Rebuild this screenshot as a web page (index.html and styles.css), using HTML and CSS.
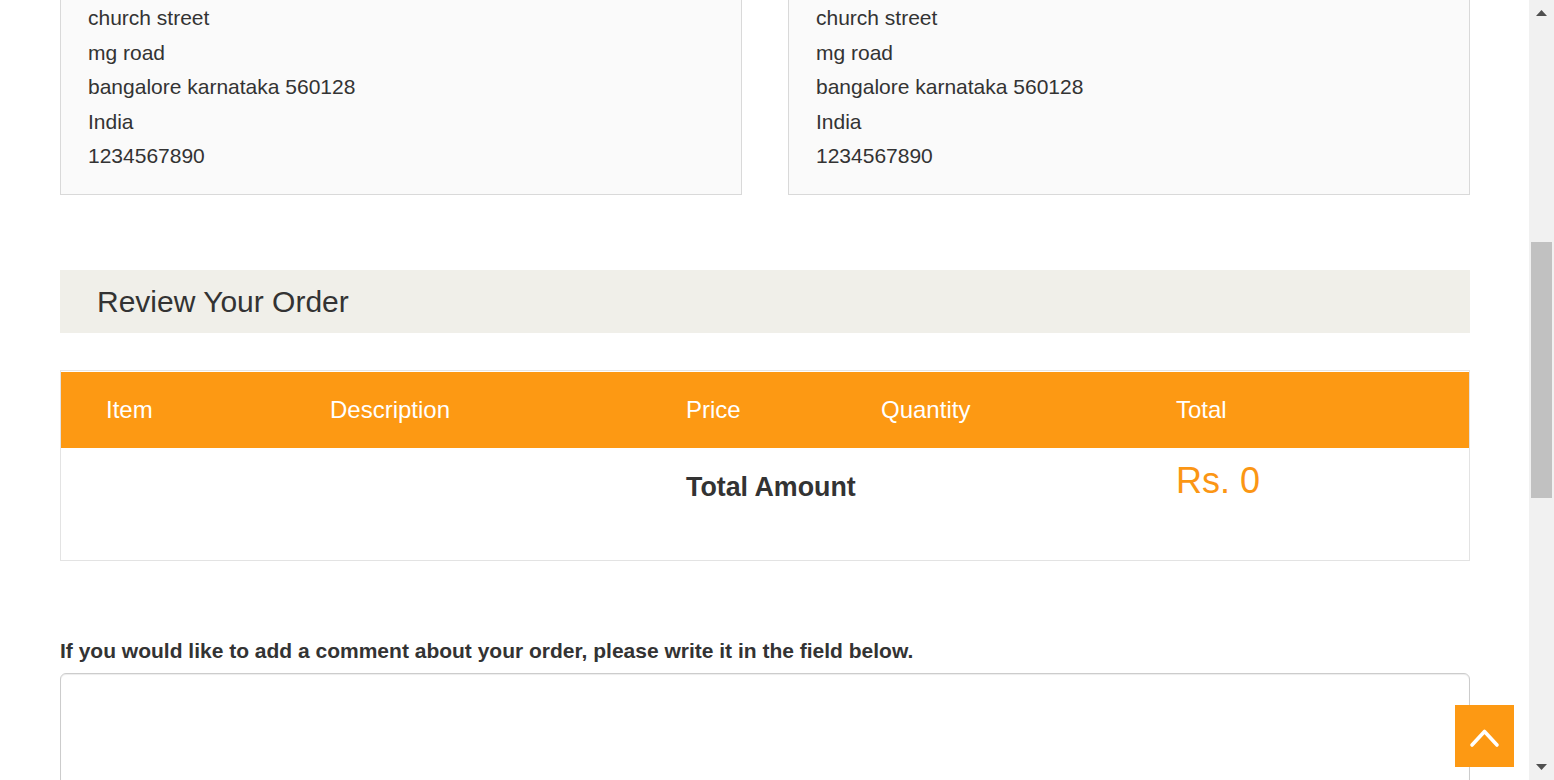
FILE: index.html
```html
<!DOCTYPE html>
<html lang="en">
<head>
<meta charset="utf-8">
<title>Review Your Order</title>
<link rel="stylesheet" href="styles.css">
</head>
<body>
<main class="page">
  <section class="addresses">
    <div class="address-box">
      <p>church street</p>
      <p>mg road</p>
      <p>bangalore karnataka 560128</p>
      <p>India</p>
      <p>1234567890</p>
    </div>
    <div class="address-box">
      <p>church street</p>
      <p>mg road</p>
      <p>bangalore karnataka 560128</p>
      <p>India</p>
      <p>1234567890</p>
    </div>
  </section>

  <h2 class="section-title">Review Your Order</h2>

  <div class="order-table">
    <div class="row head">
      <div class="cell">Item</div>
      <div class="cell">Description</div>
      <div class="cell">Price</div>
      <div class="cell">Quantity</div>
      <div class="cell">Total</div>
    </div>
    <div class="row body">
      <div class="cell"></div>
      <div class="cell"></div>
      <div class="cell total-label">Total Amount</div>
      <div class="cell"></div>
      <div class="cell total-value">Rs. 0</div>
    </div>
  </div>

  <label class="comment-label" for="comment">If you would like to add a comment about your order, please write it in the field below.</label>
  <textarea id="comment" class="comment-box"></textarea>
</main>

<a class="to-top" href="#" aria-label="Back to top">
  <svg width="59" height="62" viewBox="0 0 59 62"><polyline points="17,40 29.5,26.5 42,40" fill="none" stroke="#fff" stroke-width="3.6" stroke-linecap="round" stroke-linejoin="round"/></svg>
</a>

<div class="scrollbar" aria-hidden="true">
  <svg class="arrow up" width="11" height="7" viewBox="0 0 11 7"><polygon points="0,6 5.5,0 11,6" fill="#505050"/></svg>
  <div class="thumb"></div>
  <svg class="arrow down" width="11" height="7" viewBox="0 0 11 7"><polygon points="0,0 11,0 5.5,6" fill="#505050"/></svg>
</div>
</body>
</html>
```

FILE: styles.css
```css
html, body {
  margin: 0;
  padding: 0;
  height: 100%;
  overflow: hidden;
  background: #fff;
}

body {
  font-family: "Liberation Sans", Arial, sans-serif;
  color: #333;
}

.page {
  width: 1410px;
  margin-left: 60px;
  margin-top: -21px;
}

.addresses {
  display: grid;
  grid-template-columns: 682px 682px;
  column-gap: 46px;
}

.address-box {
  background: #fafafa;
  border: 1px solid #d9d9d9;
  padding: 21px 27px 20.5px;
  font-size: 21px;
  line-height: 34.5px;
}

.address-box p {
  margin: 0;
}

.section-title {
  margin: 75px 0 0;
  height: 63px;
  display: flex;
  align-items: center;
  padding-left: 37px;
  background: #f0efe9;
  font-size: 30px;
  font-weight: normal;
  color: #333;
}

.order-table {
  margin-top: 37px;
  border: 1px solid #e3e3e3;
  border-top-color: #e6e6e6;
  padding-top: 1px;
}

.row {
  display: grid;
  grid-template-columns: 224px 356px 195px 295px 1fr;
}

.row .cell {
  padding-left: 45px;
  white-space: nowrap;
}

.row.head {
  background: #fd9913;
  height: 76px;
  align-items: center;
  color: #fff;
  font-size: 24px;
}

.row.body {
  height: 112px;
  align-items: start;
}

.total-label {
  font-weight: bold;
  font-size: 26.8px;
  line-height: 37px;
  padding-top: 21px;
}

.total-value {
  color: #fb9614;
  font-size: 36px;
  line-height: 40px;
  padding-top: 13px;
}

.comment-label {
  display: block;
  margin-top: 75px;
  font-size: 21px;
  line-height: 30px;
  font-weight: bold;
  color: #333;
}

.comment-box {
  display: block;
  box-sizing: border-box;
  width: 1410px;
  height: 150px;
  margin-top: 7px;
  border: 1px solid #ccc;
  border-radius: 6px;
  box-shadow: inset 0 1px 1px rgba(0, 0, 0, 0.075);
  resize: none;
  font-family: "Liberation Sans", Arial, sans-serif;
}

.to-top {
  position: fixed;
  right: 40px;
  bottom: 13px;
  width: 59px;
  height: 62px;
  background: #fd9913;
  display: block;
}

.to-top svg {
  display: block;
}

.scrollbar {
  position: fixed;
  top: 0;
  right: 0;
  width: 25px;
  height: 100%;
  background: #f1f1f1;
}

.scrollbar .thumb {
  position: absolute;
  left: 2px;
  top: 242px;
  width: 21px;
  height: 256px;
  background: #c1c1c1;
}

.scrollbar .arrow {
  position: absolute;
  left: 7px;
  display: block;
}

.scrollbar .arrow.up {
  top: 10px;
}

.scrollbar .arrow.down {
  top: 764px;
}
```
